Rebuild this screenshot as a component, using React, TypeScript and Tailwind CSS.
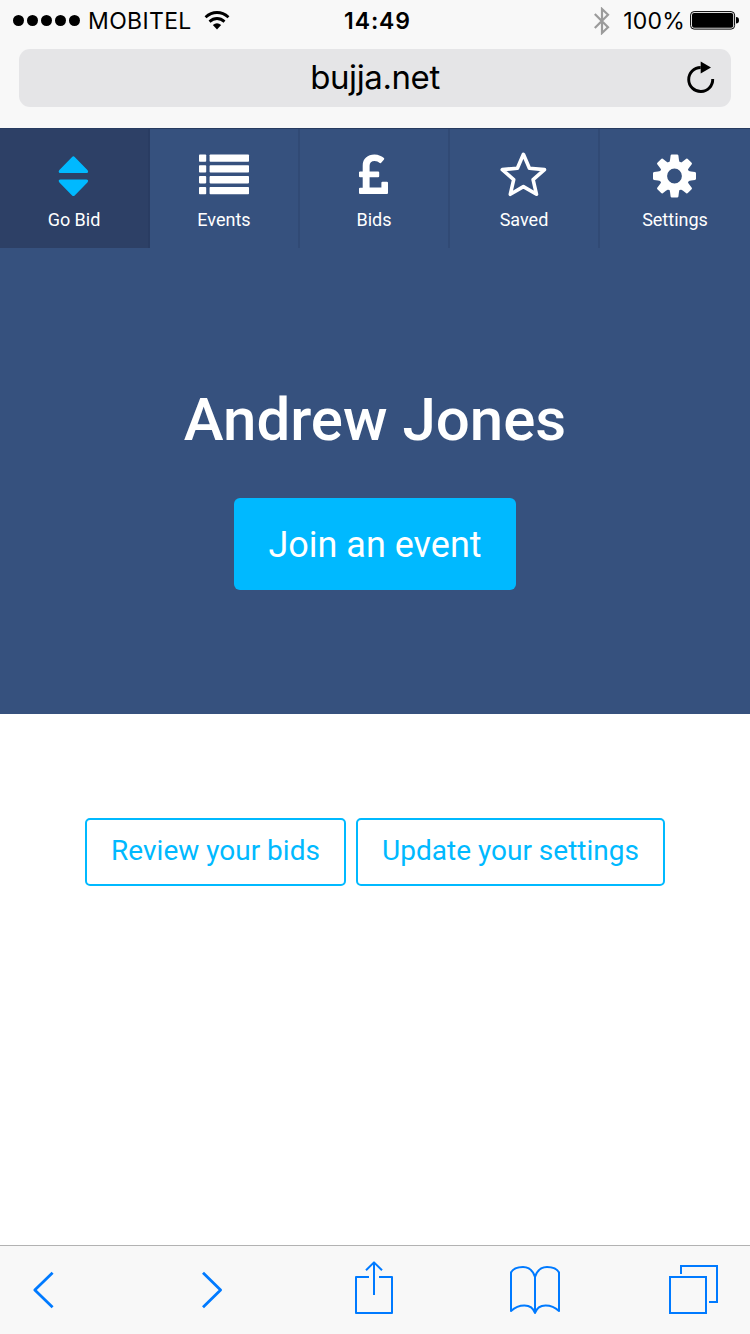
import React from "react";

interface NavTab {
  label: string;
  icon: React.ReactNode;
  active?: boolean;
}

const tabs: NavTab[] = [
  {
    label: "Go Bid",
    active: true,
    icon: (
      <g className="fill-[#00b9ff]">
        <path d="M28.1 7 Q29.4 5.7 30.7 7 L43.4 20 Q44.7 21.4 43.8 22.4 Q43.4 23 42.4 23 H16.4 Q15.4 23 15 22.4 Q14.1 21.4 15.4 20 Z" />
        <path d="M28.1 45.4 Q29.4 46.7 30.7 45.4 L43.4 32.4 Q44.7 31 43.8 30 Q43.4 29.4 42.4 29.4 H16.4 Q15.4 29.4 15 30 Q14.1 31 15.4 32.4 Z" />
      </g>
    ),
  },
  {
    label: "Events",
    icon: (
      <g className="fill-white">
        {[4.5, 15.3, 26.1, 36.9].map((y) => (
          <React.Fragment key={y}>
            <rect x="5" y={y} width="7.2" height="7.3" rx="0.8" />
            <rect x="15.6" y={y} width="39.4" height="7.3" rx="0.8" />
          </React.Fragment>
        ))}
      </g>
    ),
  },
  {
    label: "Bids",
    icon: (
      <path
        className="fill-white"
        d="M44 32.8 V43 Q44 44.1 42.9 44.1 H16.1 Q15 44.1 15 43 V38.8 Q15 37.7 16.1 37.7 H18.7 V27.2 H16.1 Q15 27.2 15 26.2 V22.5 Q15 21.5 16.1 21.5 H18.7 V15.4 C18.7 8.6 23.7 4.5 30.4 4.5 C34.6 4.5 38 6.4 39.9 8 Q40.6 8.7 40 9.4 L37.2 12.8 Q36.5 13.6 35.7 12.9 C34.4 12 32.6 11 30.6 11 C27.4 11 25.6 13 25.6 15.8 V21.5 H34.1 Q35.2 21.5 35.2 22.5 V26.2 Q35.2 27.2 34.1 27.2 H25.6 V37.5 H37.4 V32.8 Q37.4 31.8 38.5 31.8 H42.9 Q44 31.8 44 32.8 Z"
      />
    ),
  },
  {
    label: "Saved",
    icon: (
      <path
        className="fill-none stroke-white stroke-[3.6]"
        strokeLinejoin="round"
        d="M29.4 4.3 L35.4 18.2 L50.5 19.6 L39.1 29.6 L42.5 44.3 L29.4 36.6 L16.3 44.3 L19.7 29.6 L8.3 19.6 L23.4 18.2 Z"
      />
    ),
  },
  {
    label: "Settings",
    icon: (
      <g className="fill-white">
        <path
          fillRule="evenodd"
          d="M29.5 11 a15 15 0 1 0 0 30 a15 15 0 1 0 0 -30 Z M29.5 18.6 a7.4 7.4 0 1 1 0 14.8 a7.4 7.4 0 1 1 0 -14.8 Z"
        />
        {[0, 45, 90, 135, 180, 225, 270, 315].map((angle) => (
          <path
            key={angle}
            transform={`rotate(${angle} 29.5 26)`}
            d="M23.6 13.2 Q25 12 25.1 9.5 L25.6 5.5 Q25.8 4.5 26.8 4.5 H32.2 Q33.2 4.5 33.4 5.5 L33.9 9.5 Q34 12 35.4 13.2 L33 15.4 H26 Z"
          />
        ))}
      </g>
    ),
  },
];

const toolbar = [
  { name: "Back", path: <path strokeWidth="2.800" d="M52.600 26.800 L34.800 44 L52.600 61.200" /> },
  { name: "Forward", path: <path strokeWidth="2.800" d="M53 26.800 L70.600 44 L53 61.200" /> },
  {
    name: "Share",
    path: (
      <>
        <path d="M69 31 H56 V67 H92 V31 H79" />
        <path d="M74 17 V49 M66 24.300 L74 16.400 L82 24.300" />
      </>
    ),
  },
  {
    name: "Bookmarks",
    path: (
      <>
        <path d="M85 31 C83 24.500 79 21 73 21 C68 21 62.800 23 61 26.500 V65 C68.500 58 81.500 56.500 85 67 C88.500 56.500 101.500 58 109 65 V26.500 C107.200 23 102 21 97 21 C91 21 87 24.500 85 31 Z" />
        <path d="M85 30 V67" />
      </>
    ),
  },
  {
    name: "Tabs",
    path: (
      <>
        <path strokeLinejoin="miter" d="M70 31 H106 V67 H70 Z" />
        <path strokeLinejoin="miter" d="M81 28 V20 H117 V56 H109" />
      </>
    ),
  },
];

function StatusBar() {
  return (
    <div className="grid h-[41px] grid-cols-3 items-center pl-3 pr-[11px] text-[23px] leading-none">
      <div className="flex items-center">
        <div className="flex gap-[3px] pl-px">
          {[1, 2, 3, 4, 5].map((dot) => (
            <span key={dot} className="size-[11px] rounded-full bg-black" />
          ))}
        </div>
        <span className="ml-2 pt-0.5 tracking-[0.35px]">MOBITEL</span>
        <svg viewBox="0 0 26 20" className="mb-px ml-3 h-5 w-[26px] fill-none stroke-black">
          <path strokeWidth="2.800" d="M1.500 7.200 Q6.800 2.500 13 2.500 T24.500 7.200" />
          <path strokeWidth="2.800" d="M5.500 11.600 Q9 8.500 13 8.500 T20.500 11.600" />
          <path className="fill-black stroke-none" d="M8.800 15 Q13 11.500 17.200 15 L13 19.500 Z" />
        </svg>
      </div>
      <span className="pl-1 pt-0.5 text-center font-semibold tracking-[0.9px]">14:49</span>
      <div className="flex items-center justify-end">
        <svg viewBox="0 0 18 28" className="mr-3 h-7 w-[18px] fill-none stroke-[#9b9b9b] stroke-[2.2]">
          <path d="M1.800 7 L15 20.300 L9 26 V2 L15 7.700 L1.800 21" />
        </svg>
        <span className="pt-0.5 tracking-[0.2px]">100%</span>
        <svg viewBox="0 0 49 20" className="mb-0.5 ml-[5px] h-5 w-[49px]">
          <rect x="0.600" y="1.600" width="44" height="17.500" rx="3.500" className="fill-none stroke-black" />
          <rect x="2" y="3" width="41.200" height="14.700" rx="2" />
          <path d="M46 7 Q49 7 49 10.300 Q49 13.600 46 13.600 Z" />
        </svg>
      </div>
    </div>
  );
}

function AddressBar() {
  return (
    <div className="mx-[19px] mt-2 grid h-[58px] grid-cols-[50px_1fr_50px] items-center rounded-[11px] bg-[#e5e5e7]">
      <span />
      <span className="pb-px text-center text-[33px] leading-none tracking-[-0.4px]">bujja.net</span>
      <svg viewBox="0 0 30 34" className="ml-[5px] h-[34px] w-[30px]">
        <path d="M26.700 18 A12 12 0 1 1 14.700 6.500" className="fill-none stroke-black stroke-[2.9]" />
        <path d="M14.700 0.500 L25 6.500 L14.700 12.500 Z" />
      </svg>
    </div>
  );
}

export default function App() {
  return (
    <div className="flex h-[1334px] w-[750px] flex-col overflow-hidden bg-white font-['Roboto',sans-serif]">
      <header className="h-32 shrink-0 bg-[#f8f8f8] font-['Inter',sans-serif] text-black">
        <StatusBar />
        <AddressBar />
      </header>

      <section className="h-[586px] shrink-0 bg-[#36517e] text-white">
        <nav className="grid h-[120px] grid-cols-5 border-t border-[#273b60]">
          {tabs.map(({ label, icon, active }) => (
            <a
              key={label}
              className={`flex flex-col items-center border-r-2 pt-[21px] last:border-r-0 ${
                active ? "border-[#293c62] bg-[#2d4066]" : "border-[#314a75]"
              }`}
            >
              <svg viewBox="0 0 60 50" className="h-[50px] w-[60px]">
                {icon}
              </svg>
              <span className="mt-[9px] text-[18px] leading-[22px]">{label}</span>
            </a>
          ))}
        </nav>

        <div className="flex flex-col items-center pt-[137px]">
          <h1 className="text-[60px] font-medium leading-[70px]">Andrew Jones</h1>
          <button className="mt-[43px] h-[92px] w-[282px] rounded-md bg-[#00b9ff] pt-px text-[36px]">
            Join an event
          </button>
        </div>
      </section>

      <main className="flex flex-1 items-start justify-center gap-[10px] pt-[104px] text-[28px] text-[#00b9ff]">
        <button className="h-[68px] w-[261px] rounded-[5px] border-2 border-[#00b9ff] pb-0.5">
          Review your bids
        </button>
        <button className="h-[68px] w-[309px] rounded-[5px] border-2 border-[#00b9ff] pb-0.5">
          Update your settings
        </button>
      </main>

      <footer className="grid h-[89px] shrink-0 grid-cols-5 border-t border-[#b2b2b2] bg-[#f8f8f8]">
        {toolbar.map(({ name, path }) => (
          <button key={name} aria-label={name}>
            <svg
              viewBox="0 0 150 88"
              className="h-[88px] w-[150px] fill-none stroke-[#007aff]"
              strokeWidth="2"
              strokeLinejoin="round"
            >
              {path}
            </svg>
          </button>
        ))}
      </footer>
    </div>
  );
}
